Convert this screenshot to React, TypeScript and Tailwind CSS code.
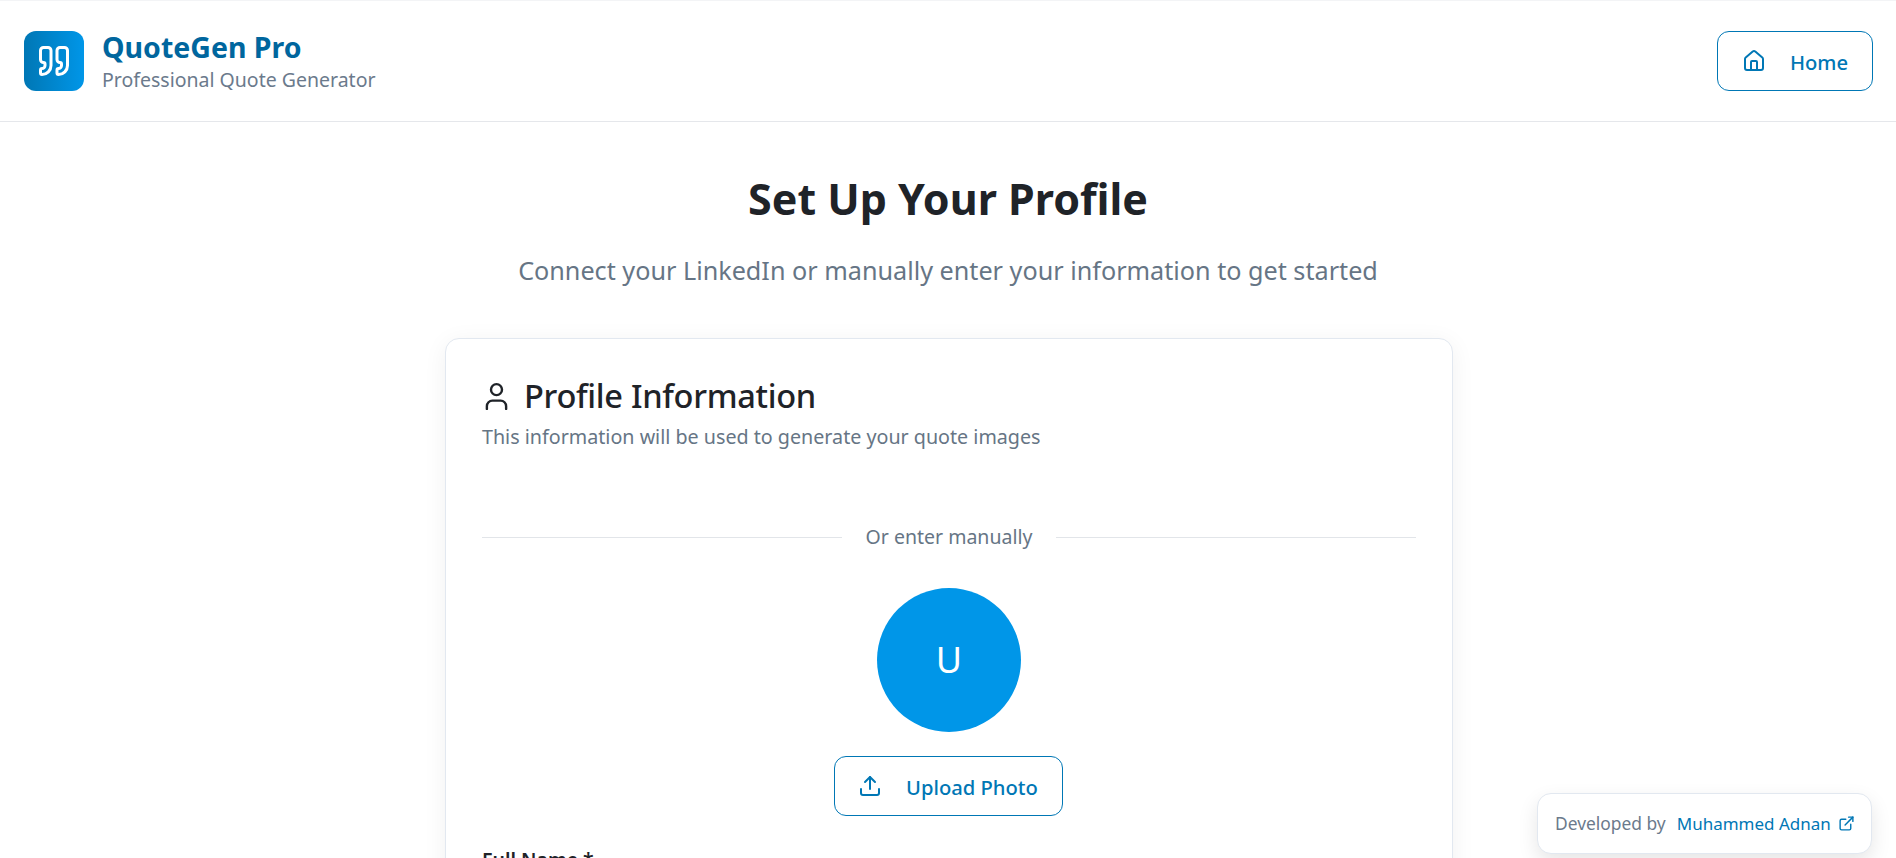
import React from 'react';
import { Quote, House, User, Upload, ExternalLink } from 'lucide-react';

function BrandBlock() {
  return (
    <div className="flex items-center gap-[18px]">
      <div className="w-[60px] h-[60px] rounded-[12px] flex items-center justify-center bg-gradient-to-r from-[#0077b5] to-[#0096e8]">
        <Quote className="w-[36px] h-[36px] text-white" strokeWidth={2} />
      </div>
      <div>
        <h1 className="text-[28.5px] leading-[34px] font-bold text-[#00669e]">QuoteGen Pro</h1>
        <p className="text-[19.5px] leading-[26px] mt-[3px] text-[#6b7a8c]">Professional Quote Generator</p>
      </div>
    </div>
  );
}

function OutlineButton({ icon, label, className }: { icon: React.ReactNode; label: string; className: string }) {
  return (
    <button type="button" className={`h-[60px] rounded-[12px] border border-[#0077b5] text-[#0077b5] flex items-center justify-center font-medium text-[20.2px] ${className}`}>
      {icon}
      <span className="pt-[3px]">{label}</span>
    </button>
  );
}

export default function App() {
  return (
    <div className="h-screen overflow-hidden bg-white relative" style={{ fontFamily: '"Noto Sans", sans-serif' }}>
      <header className="h-[122px] border-t border-t-[#f3f4f6] border-b border-b-[#e5e7eb] flex items-center justify-between pl-6 pr-[23px]">
        <BrandBlock />
        <OutlineButton className="w-[156px] gap-[24px]" label="Home" icon={<House className="w-[24px] h-[24px]" />} />
      </header>

      <main className="flex flex-col items-center">
        <h2 className="mt-[49px] text-[43px] leading-[56px] font-bold text-[#1f2328]">Set Up Your Profile</h2>
        <p className="mt-[24px] text-[25.2px] leading-[38px] text-[#667585]">Connect your LinkedIn or manually enter your information to get started</p>

        <section className="mt-[49px] w-[1008px] ml-[2px] rounded-[14px] border border-[#e2e8f0] bg-white shadow-[0_4px_24px_rgba(0,0,0,0.06)] px-[36px] pt-[34px]">
          <div className="flex items-center gap-[11px] -ml-[2px]">
            <User className="w-[33px] h-[33px] text-[#1f2328]" strokeWidth={1.75} />
            <h3 className="text-[32.6px] leading-[46px] font-medium tracking-[-0.3px] text-[#1f2328]">Profile Information</h3>
          </div>
          <p className="mt-[4px] text-[19.7px] leading-[28px] text-[#667585]">This information will be used to generate your quote images</p>

          <div className="mt-[72px] flex items-center gap-[24px]">
            <div className="flex-1 h-px bg-[#e2e5e9]" />
            <span className="text-[19.5px] leading-[28px] text-[#667585]">Or enter manually</span>
            <div className="flex-1 h-px bg-[#e2e5e9]" />
          </div>

          <div className="mt-[37px] flex flex-col items-center">
            <div className="w-[144px] h-[144px] rounded-full bg-[#0096e8] flex items-center justify-center text-white text-[36px]">U</div>
            <OutlineButton className="mt-[24px] w-[229px] gap-[24px] mr-[2px]" label="Upload Photo" icon={<Upload className="w-[24px] h-[24px]" />} />
          </div>

          <label className="block mt-[30px] text-[19.5px] leading-[28px] font-semibold text-[#1f2328]">Full Name *</label>
          <input className="mt-2 w-full h-[60px] rounded-[12px] border border-[#e2e8f0]" aria-label="Full Name" />
        </section>
      </main>

      <div className="absolute right-[24px] bottom-[4px] w-[335px] h-[61px] rounded-[14px] border border-[#e2e8f0] bg-white shadow-[0_8px_20px_rgba(0,0,0,0.1)] flex items-center pl-[17px] gap-[11px] text-[17px]">
        <span className="text-[#6b7a8c] text-[17.4px]">Developed by</span>
        <span className="flex items-center gap-[7px] text-[#0077b5]">
          Muhammed Adnan
          <ExternalLink className="w-[17px] h-[17px]" />
        </span>
      </div>
    </div>
  );
}
